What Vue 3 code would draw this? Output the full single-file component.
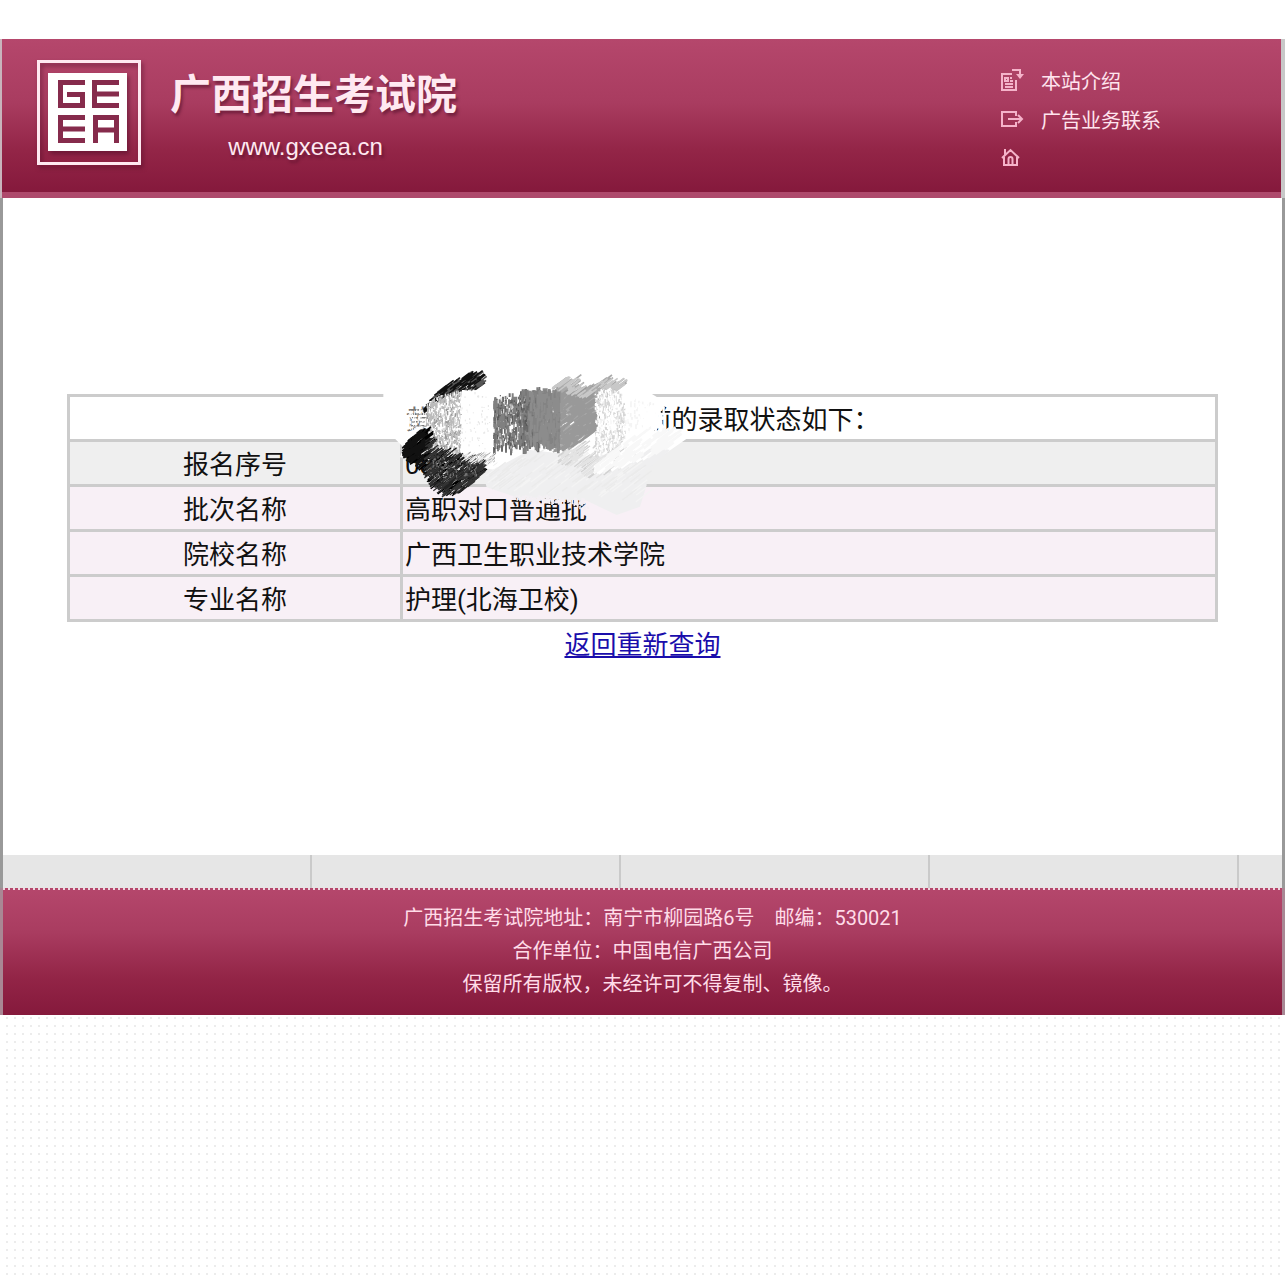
<template>
    <div class="page">
        <header class="header">
            <svg class="logo" width="112" height="112" viewBox="0 0 112 112" role="img" aria-label="GEEA">
                <rect x="2.5" y="2.5" width="101" height="102" fill="none" stroke="#ffe9f1" stroke-width="3" />
                <rect x="12" y="14" width="79" height="78" fill="#fff" />
                <g fill="none" stroke="#862b4c" stroke-width="5">
                    <path d="M49 23.5H24.500V46.5H46.500V35.5H31" />
                    <path d="M83 23.5H58.5V46.5H83M58.5 35H83" />
                    <path d="M49 58.5H24.500V81.5H49M24.500 70H49" />
                    <path d="M59.5 84V58.5H80.5V84M59.5 71H80.5" />
                </g>
            </svg>
            <div class="brand">
                <h1 class="brand-name">广西招生考试院</h1>
                <p class="brand-url">www.gxeea.cn</p>
            </div>
            <nav class="menu">
                <a href="#" class="menu-item">
                    <svg width="26" height="26" viewBox="0 0 26 26" class="icon">
                        <path d="M13 6H3V22H17V12M6 10H9V13H6ZM11 10H13M11 13H14M6 16H14M6 19H14" />
                        <path d="M13 2H21V7" />
                        <path d="M17 6H25L21 11Z" class="icon-fill" />
                    </svg>
                    本站介绍
                </a>
                <a href="#" class="menu-item">
                    <svg width="26" height="26" viewBox="0 0 26 26" class="icon">
                        <path d="M17 9V5H3V19H17V15M9 12H23M19 8L23 12L19 16" />
                    </svg>
                    广告业务联系
                </a>
                <a href="#" class="menu-item" aria-label="首页">
                    <svg width="26" height="26" viewBox="0 0 26 26" class="icon">
                        <path d="M3 12L11.500 4L20 12M6 9V3M5 11V19H18V11M9.500 19V13Q9.500 11 11.500 11T13.500 13V19" />
                    </svg>
                </a>
            </nav>
        </header>

        <main class="main">
            <div class="result">
                <table class="result-table">
                    <colgroup>
                        <col class="col-label" />
                        <col />
                    </colgroup>
                    <thead>
                        <tr>
                            <th colspan="2"><span class="student">黄</span>前的录取状态如下：</th>
                        </tr>
                    </thead>
                    <tbody>
                        <tr v-for="row in rows" :key="row.label">
                            <th scope="row">{{ row.label }}</th>
                            <td>{{ row.value }}</td>
                        </tr>
                    </tbody>
                </table>
                <!-- закрашенные личные данные -->
                <svg class="scribble" width="310" height="147" viewBox="30 24 930 441" aria-hidden="true">
                    <path d="M40 92H830L875 120L862 140L870 200L830 228L950 236L880 285L820 330L700 378L480 345L170 300L90 292L100 262L75 236L130 215H170V130L40 118Z" fill="#fff" />
                    <path d="M340 345L480 270L660 290L860 262L900 270L825 335L830 375L810 440L740 465L650 422L560 418L440 412L350 382Z" fill="#efeff0" />
                    <path
                        v-for="(stroke, i) in strokes"
                        :key="i"
                        :d="stroke.d"
                        :stroke="stroke.color"
                        :stroke-width="stroke.width"
                        fill="none"
                    />
                </svg>
            </div>
            <a href="#" class="back-link">返回重新查询</a>
        </main>

        <div class="strip"></div>
        <footer class="footer">
            <p>广西招生考试院地址：南宁市柳园路6号　邮编：530021</p>
            <p>合作单位：中国电信广西公司</p>
            <p>保留所有版权，未经许可不得复制、镜像。</p>
        </footer>
    </div>
</template>

<script setup>
const rows = [
    { label: '报名序号', value: '08' },
    { label: '批次名称', value: '高职对口普通批' },
    { label: '院校名称', value: '广西卫生职业技术学院' },
    { label: '专业名称', value: '护理(北海卫校)' }
]

let seed = 17
const random = () => {
    seed = (seed * 16807) % 2147483647
    return seed / 2147483647
}

const strokes = []

// points: [x, top, bottom]
const edge = (points, x, k) => {
    for (let i = 1; i < points.length; i++) {
        if (x <= points[i][0]) {
            const a = points[i - 1]
            const b = points[i]
            return a[k] + ((b[k] - a[k]) * (x - a[0])) / (b[0] - a[0])
        }
    }
    return points[points.length - 1][k]
}

const brush = (points, colors, count, length, slope, width) => {
    const x0 = points[0][0]
    const x1 = points[points.length - 1][0]
    colors.forEach((color) => {
        let d = ''
        for (let i = 0; i < count; i++) {
            const x = x0 + random() * (x1 - x0)
            const top = edge(points, x, 1)
            const bottom = edge(points, x, 2)
            const y = top + random() * (bottom - top)
            const l = length * (0.4 + random())
            d += `M${x.toFixed(0)} ${y.toFixed(0)}l${(l * slope[0]).toFixed(0)} ${(l * slope[1]).toFixed(0)}`
        }
        strokes.push({ d, color, width })
    })
}

const DOWN = [0, 1]
const DIAGONAL = [0.8, -0.6]

brush([[116, 150, 205], [168, 145, 205]], ['#fff', '#fff'], 45, 9, DOWN, 3)
brush([[340, 350, 385], [480, 290, 400], [660, 300, 410], [800, 300, 430]], ['#f4f4f4', '#ebebeb'], 60, 50, DIAGONAL, 4)
brush([[560, 285, 310], [670, 250, 365], [740, 265, 325]], ['#d2d2d2', '#e4e4e4'], 65, 40, DIAGONAL, 4)
brush([[670, 320, 350], [800, 220, 310], [890, 235, 270]], ['#fff', '#f8f8f8'], 60, 45, DIAGONAL, 8)
brush([[160, 145, 160], [200, 95, 125], [260, 62, 102], [300, 42, 95], [330, 60, 85]], ['#222', '#555', '#111'], 60, 26, DIAGONAL, 5)
brush([[172, 130, 265], [200, 108, 280], [275, 88, 290]], ['#ddd', '#999', '#fff', '#bbb'], 300, 9, DOWN, 4)
brush([[275, 90, 275], [365, 88, 280]], ['#fff'], 360, 22, DOWN, 8)
brush([[270, 90, 275], [360, 95, 270]], ['#e4e4e4'], 60, 5, DOWN, 3)
brush([[545, 78, 280], [600, 105, 270], [665, 85, 220]], ['#aaa', '#999'], 320, 28, DIAGONAL, 6)
brush([[545, 78, 88], [605, 62, 110], [635, 105, 115], [705, 60, 115], [740, 84, 92]], ['#aaa', '#c8c8c8'], 60, 34, DIAGONAL, 5)
brush([[455, 105, 235], [510, 82, 245], [568, 88, 250]], ['#8a8a8a'], 420, 24, DOWN, 8)
brush([[372, 105, 265], [392, 118, 250], [420, 85, 270], [440, 108, 250], [465, 78, 265], [485, 95, 240], [510, 70, 255]], ['#777', '#696969', '#808080'], 140, 20, DOWN, 6)
brush([[480, 90, 240], [568, 88, 250]], ['#838383', '#8c8c8c'], 170, 20, DOWN, 6)
brush([[372, 105, 265], [470, 100, 260]], ['#ddd', '#555'], 55, 9, DOWN, 3)
brush([[676, 96, 285], [720, 84, 265], [765, 100, 230]], ['#ededed', '#d6d6d6', '#fff'], 220, 10, DOWN, 4)
brush([[765, 105, 220], [860, 130, 180]], ['#f4f4f4', '#fff'], 60, 10, DOWN, 5)
brush([[815, 135, 200], [882, 135, 200]], ['#fff'], 110, 14, DOWN, 7)
brush([[96, 265, 290], [130, 222, 325], [165, 205, 350]], ['#000', '#111'], 110, 28, DIAGONAL, 5)
brush([[160, 215, 350], [180, 270, 385], [220, 285, 415], [270, 292, 402], [325, 320, 350]], ['#000', '#222', '#333'], 150, 28, DIAGONAL, 4)
brush([[180, 285, 350], [320, 305, 345]], ['#777'], 75, 7, DOWN, 3)
brush([[270, 285, 305], [370, 285, 320]], ['#aaa', '#eee'], 50, 14, DIAGONAL, 3)
brush([[430, 405, 415], [530, 405, 422], [655, 415, 445]], ['#f3eff3'], 130, 9, DOWN, 5)
</script>

<style>
body {
    background: #fff;
}
</style>

<style scoped>
.page {
    min-height: 100vh;
    box-sizing: border-box;
    font-family: Roboto, "Noto Sans CJK SC", sans-serif;
    background: radial-gradient(circle at 7px 2px, #ececec 1px, transparent 1px) 0 0 / 8px 8px;
}

.page::before {
    content: "";
    display: block;
    height: 39px;
    background: #fff;
}

.header {
    display: flex;
    align-items: flex-start;
    height: 159px;
    padding-left: 34px;
    border-left: 2px solid #c8b4bc;
    border-right: 4px solid #c8c8c8;
    background: linear-gradient(#b5476c, #a93c60 40%, #932547 70%, #85193c 153px, #ae4a6c 153px);
    color: #ffe9f1;
}

.logo {
    flex: none;
    margin-top: 20px;
    filter: drop-shadow(2px 3px 2px rgba(70, 10, 35, 0.5));
}

.brand {
    padding: 26px 0 0 22px;
    text-shadow: 2px 3px 3px rgba(70, 10, 35, 0.5);
}

.brand-name {
    margin: 0;
    font-size: 41px;
    font-weight: 700;
    line-height: 60px;
}

.brand-url {
    margin: 0;
    padding-right: 16px;
    font-family: "Liberation Sans", sans-serif;
    font-size: 24px;
    line-height: 44px;
    text-align: center;
}

.menu {
    flex: 0 0 22%;
    margin-left: auto;
    padding: 22px 8px 0 0;
    box-sizing: content-box;
}

.menu-item {
    display: flex;
    align-items: center;
    gap: 16px;
    height: 39px;
    font-size: 20px;
    color: #ffe4ee;
    text-decoration: none;
}

.icon {
    flex: none;
    fill: none;
    stroke: #f5b3ca;
    stroke-width: 2;
}

.icon-fill {
    fill: #f5b3ca;
    stroke: none;
}

.main {
    padding: 196px 0 189px;
    border-left: 3px solid #999;
    border-right: 3px solid #999;
    background: #fff;
    font-size: 26px;
    line-height: 38px;
    text-align: center;
}

.result {
    position: relative;
    width: 90%;
    margin: 0 auto;
}

.result-table {
    width: 100%;
    table-layout: fixed;
    border-collapse: collapse;
    color: #111;
}

.col-label {
    width: 29%;
}

.result-table th,
.result-table td {
    padding: 4px 2px 0;
    border: 3px solid #ccc;
    font-weight: 400;
}

.result-table tbody th,
.result-table tbody td {
    background: #f8f0f6;
}

.result-table tbody tr:first-child th,
.result-table tbody tr:first-child td {
    background: #efefef;
}

.result-table td {
    text-align: left;
}

.student {
    display: inline-block;
    width: 240px;
    text-align: left;
    color: #777;
}

.scribble {
    position: absolute;
    top: -26px;
    left: 313px;
}

.back-link {
    display: inline-block;
    padding: 4px 0 2px;
    color: #1a0dab;
}

.strip {
    height: 33px;
    border-left: 3px solid #999;
    border-right: 3px solid #999;
    background: repeating-linear-gradient(90deg, #e6e6e6 0 307px, #cacaca 307px 309px);
}

.footer {
    padding: 14px 0;
    border-left: 3px solid #a98794;
    border-right: 3px solid #a98794;
    background:
        repeating-linear-gradient(90deg, #f0d8e0 0 2px, transparent 2px 5px) 0 0 / 100% 2px no-repeat,
        linear-gradient(#b5476c, #a93c60 35%, #932547 70%, #85193c);
    font-size: 20px;
    line-height: 33px;
    text-align: center;
    color: #ffdce8;
}

.footer p {
    margin: 0;
}

.footer p:nth-child(odd) {
    padding-left: 20px;
}
</style>
